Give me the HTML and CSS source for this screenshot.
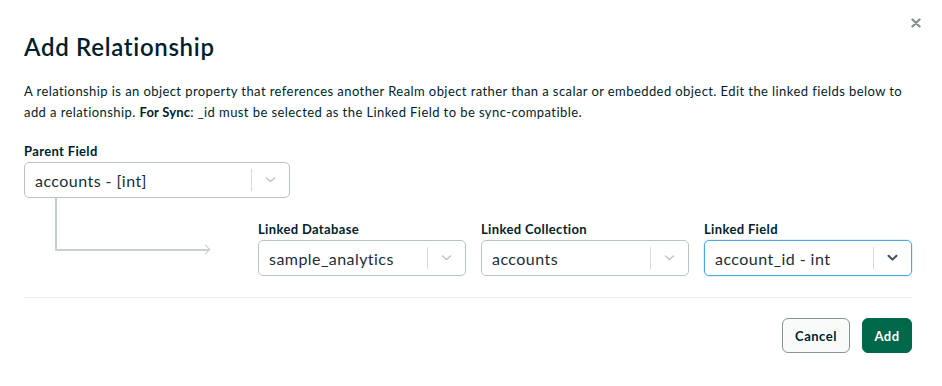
FILE: index.html
```html
<!DOCTYPE html>
<html>
<head>
<meta charset="utf-8">
<link rel="stylesheet" href="styles.css">
</head>
<body>
<div class="modal">
  <button class="close" aria-label="Close">
    <svg width="10" height="10" viewBox="0 0 10 10"><path d="M1.5 1.5 L8.5 8.5 M8.5 1.5 L1.5 8.5" stroke="#889397" stroke-width="2.4" stroke-linecap="round"/></svg>
  </button>
  <h2 class="title">Add Relationship</h2>
  <p class="desc">A relationship is an object property that references another Realm object rather than a scalar or embedded object. Edit the linked fields below to add a relationship. <b>For Sync</b>: _id must be selected as the Linked Field to be sync-compatible.</p>

  <div class="field parent">
    <label class="label">Parent Field</label>
    <div class="select">
      <span class="value">accounts - [int]</span>
      <span class="sep"></span>
      <svg class="chev" width="12" height="8" viewBox="0 0 12 8"><path d="M2 2 L6 5.5 L10 2" fill="none" stroke="#c1c7c6" stroke-width="1.6" stroke-linecap="round" stroke-linejoin="round"/></svg>
    </div>
  </div>

  <div class="linked-row">
    <div class="connector"><span class="elbow"></span><span class="arrow"></span></div>
    <div class="fields">
      <div class="field">
        <label class="label">Linked Database</label>
        <div class="select">
          <span class="value">sample_analytics</span>
          <span class="sep"></span>
          <svg class="chev" width="12" height="8" viewBox="0 0 12 8"><path d="M2 2 L6 5.5 L10 2" fill="none" stroke="#c1c7c6" stroke-width="1.6" stroke-linecap="round" stroke-linejoin="round"/></svg>
        </div>
      </div>
      <div class="field">
        <label class="label">Linked Collection</label>
        <div class="select">
          <span class="value">accounts</span>
          <span class="sep"></span>
          <svg class="chev" width="12" height="8" viewBox="0 0 12 8"><path d="M2 2 L6 5.5 L10 2" fill="none" stroke="#c1c7c6" stroke-width="1.6" stroke-linecap="round" stroke-linejoin="round"/></svg>
        </div>
      </div>
      <div class="field">
        <label class="label">Linked Field</label>
        <div class="select focused">
          <span class="value">account_id - int</span>
          <span class="sep"></span>
          <svg class="chev" width="12" height="8" viewBox="0 0 12 8"><path d="M2 1.8 L6 5.6 L10 1.8" fill="none" stroke="#3d4f58" stroke-width="2" stroke-linecap="round" stroke-linejoin="round"/></svg>
        </div>
      </div>
    </div>
  </div>

  <hr class="divider">

  <div class="footer">
    <button class="btn cancel">Cancel</button>
    <button class="btn add">Add</button>
  </div>
</div>
</body>
</html>
```

FILE: styles.css
```css
html, body {
  margin: 0;
  padding: 0;
  background: #ffffff;
}

body {
  font-family: Lato, "Liberation Sans", sans-serif;
  color: #001e2b;
}

.modal {
  position: relative;
  width: 942px;
  height: 386px;
  box-sizing: border-box;
  padding: 31px 30px 0 24px;
}

.close {
  position: absolute;
  top: 16px;
  right: 19px;
  width: 14px;
  height: 14px;
  padding: 0;
  border: 0;
  background: none;
  display: flex;
  align-items: center;
  justify-content: center;
}

.title {
  margin: 0;
  font-size: 24px;
  line-height: 32px;
  font-weight: 600;
  letter-spacing: 0.7px;
  color: #001e2b;
}

.desc {
  margin: 18px 0 0;
  font-size: 13px;
  line-height: 21px;
  letter-spacing: 0.42px;
  color: #001e2b;
}

.desc b {
  font-weight: 700;
  letter-spacing: 0.2px;
}

.field {
  display: flex;
  flex-direction: column;
}

.parent {
  margin-top: 18px;
  width: 266px;
}

.label {
  font-size: 13px;
  line-height: 20px;
  font-weight: 700;
  letter-spacing: 0.35px;
  color: #001e2b;
  margin-bottom: 1px;
}

.select {
  height: 36px;
  box-sizing: border-box;
  border: 1px solid #b8c4c2;
  border-radius: 5px;
  display: flex;
  align-items: center;
  padding-left: 10px;
  background: #fff;
}

.select .value {
  flex: 1;
  font-size: 16px;
  letter-spacing: 0.45px;
  color: #1c2d38;
  white-space: nowrap;
}

.select .sep {
  width: 1px;
  height: 22px;
  background: #d5dbdb;
}

.select .chev {
  width: 37px;
  flex: none;
}

.select.focused {
  border-color: #48a8e8;
  box-shadow: 0 0 0 1px rgba(72, 168, 232, 0.15);
}

.linked-row {
  display: flex;
}

.connector {
  width: 234px;
  flex: none;
  position: relative;
}

.connector .elbow {
  display: block;
  margin-left: 31px;
  width: 154px;
  height: 53px;
  border-left: 2px solid #c6d0cc;
  border-bottom: 2px solid #c6d0cc;
  box-sizing: border-box;
}

.connector .arrow {
  position: absolute;
  left: 178px;
  top: 48px;
  width: 6px;
  height: 6px;
  border-top: 1.5px solid #c6d0cc;
  border-right: 1.5px solid #c6d0cc;
  transform: rotate(45deg);
}

.fields {
  flex: 1;
  display: grid;
  grid-template-columns: repeat(3, 1fr);
  column-gap: 15px;
  padding-top: 21px;
}

.divider {
  margin: 21px 0 0;
  border: 0;
  height: 1px;
  background: #e8edeb;
}

.footer {
  display: flex;
  justify-content: flex-end;
  gap: 12px;
  padding-top: 20px;
}

.btn {
  height: 35px;
  box-sizing: border-box;
  border-radius: 6px;
  font-family: Lato, "Liberation Sans", sans-serif;
  font-size: 13px;
  font-weight: 700;
  letter-spacing: 0.5px;
  padding: 0;
  cursor: pointer;
}

.cancel {
  background: #f9fbfa;
  border: 1px solid #889397;
  color: #001e2b;
  width: 68px;
}

.add {
  background: #00684a;
  border: 1px solid #00684a;
  color: #ffffff;
  width: 50px;
}
```
